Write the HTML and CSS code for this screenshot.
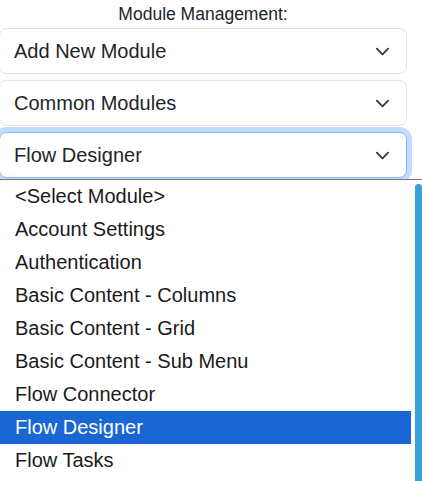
FILE: index.html
```html
<!DOCTYPE html>
<html lang="en">
<head>
<meta charset="utf-8">
<title>Module Management</title>
<link rel="stylesheet" href="styles.css">
</head>
<body>
<div class="panel">
  <div class="title">Module Management:</div>
  <div class="select">
    <span class="value">Add New Module</span>
    <svg class="chev" width="15" height="15" viewBox="0 0 16 16"><path d="m2 5 6 6 6-6" fill="none" stroke="#343a40" stroke-width="2" stroke-linecap="round" stroke-linejoin="round"/></svg>
  </div>
  <div class="select">
    <span class="value">Common Modules</span>
    <svg class="chev" width="15" height="15" viewBox="0 0 16 16"><path d="m2 5 6 6 6-6" fill="none" stroke="#343a40" stroke-width="2" stroke-linecap="round" stroke-linejoin="round"/></svg>
  </div>
  <div class="select focus">
    <span class="value">Flow Designer</span>
    <svg class="chev" width="15" height="15" viewBox="0 0 16 16"><path d="m2 5 6 6 6-6" fill="none" stroke="#343a40" stroke-width="2" stroke-linecap="round" stroke-linejoin="round"/></svg>
  </div>
</div>
<div class="popup">
  <ul class="options">
    <li>&lt;Select Module&gt;</li>
    <li>Account Settings</li>
    <li>Authentication</li>
    <li>Basic Content - Columns</li>
    <li>Basic Content - Grid</li>
    <li>Basic Content - Sub Menu</li>
    <li>Flow Connector</li>
    <li class="selected">Flow Designer</li>
    <li>Flow Tasks</li>
  </ul>
  <div class="track"><div class="thumb"></div></div>
</div>
</body>
</html>
```
FILE: styles.css
```css
html, body {
  margin: 0;
  padding: 0;
  background: #ffffff;
  overflow: hidden;
}
body {
  width: 422px;
  height: 481px;
  font-family: "Liberation Sans", Arial, sans-serif;
  color: #212529;
  position: relative;
}
.panel {
  width: 408px;
  margin-left: -1px;
}
.title {
  height: 28px;
  line-height: 28px;
  font-size: 17.5px;
  text-align: center;
}
.select {
  box-sizing: border-box;
  height: 46px;
  margin-bottom: 6px;
  border: 1px solid #dee2e6;
  border-radius: 7.5px;
  padding: 0 16.5px 0 14px;
  display: flex;
  align-items: center;
  font-size: 20px;
  background: #fff;
}
.select .value {
  flex: 1;
}
.select .chev {
  display: block;
}
.select.focus {
  border-color: #86b7fe;
  box-shadow: 0 0 0 5px rgba(13, 110, 253, 0.25);
}
.popup {
  position: absolute;
  top: 179px;
  left: 0;
  right: 0;
  bottom: 0;
  border-top: 1px solid #767676;
  background: #fff;
  display: flex;
}
.options {
  list-style: none;
  margin: 0;
  padding: 0;
  width: 411px;
}
.options li {
  height: 33px;
  line-height: 33px;
  padding-left: 15px;
  font-size: 20px;
  color: #1a1a1a;
}
.options li.selected {
  background: #1967d2;
  color: #ffffff;
}
.track {
  flex: 1;
  padding: 4px 0 0 4px;
}
.thumb {
  height: 100%;
  background: #3a9fd8;
  border-radius: 4px 4px 0 0;
}
```
